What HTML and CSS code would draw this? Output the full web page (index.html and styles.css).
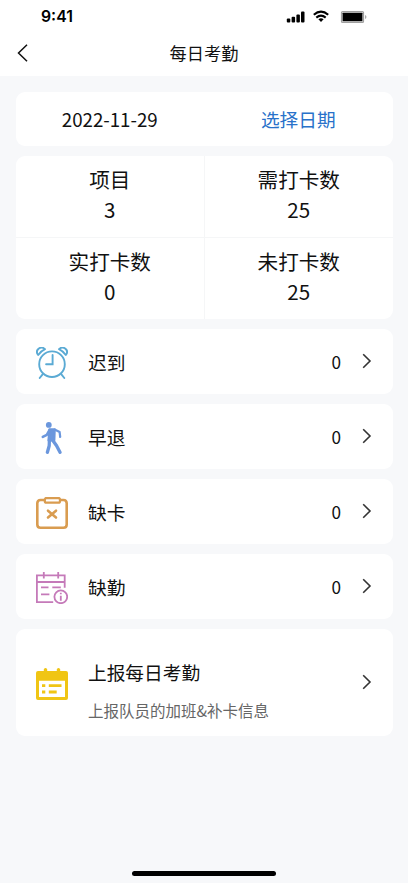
FILE: index.html
```html
<!DOCTYPE html>
<html lang="zh-CN">
<head>
<meta charset="UTF-8">
<meta name="viewport" content="width=device-width, initial-scale=1">
<title>每日考勤</title>
<link rel="stylesheet" href="styles.css">
</head>
<body>
<header class="top">
  <div class="status">
    <span class="clock">9:41</span>
    <svg class="status-icons" width="84" height="16" viewBox="0 0 84 16">
      <g fill="#000">
        <rect x="0.8" y="9.5" width="3.5" height="4" rx="1"/>
        <rect x="5.6" y="7.8" width="3.5" height="5.7" rx="1"/>
        <rect x="10.4" y="5.5" width="3.5" height="8" rx="1"/>
        <rect x="15" y="2.5" width="3.5" height="11" rx="1"/>
        <path d="M32.4 10.2 Q35 8.1 37.6 10.2 L35 13Z"/>
      </g>
      <path d="M27.8 5.8Q35 -0.4 42.2 5.8M30.3 8.6Q35 4.7 39.7 8.6" fill="none" stroke="#000" stroke-width="2.1"/>
      <rect x="55.6" y="2.6" width="21.8" height="10.8" rx="1" fill="none" stroke="#a0a0a0" stroke-width="1.4"/>
      <rect x="56.6" y="3.7" width="19.8" height="8.6" rx="0.6"/>
      <path d="M79.2 6v4q1.2-.6 1.2-2t-1.2-2Z" fill="#999"/>
    </svg>
  </div>
  <div class="nav">
    <svg class="back" width="12" height="20" viewBox="0 0 12 20"><path d="M10 1.7 1.5 10 10 18.3" fill="none" stroke="#111" stroke-width="1.5"/></svg>
    <h1>每日考勤</h1>
  </div>
</header>
<main>
  <section class="card date"><span>2022-11-29</span><span class="pick">选择日期</span></section>
  <section class="card stats">
    <div class="stat"><span>项目</span><span>3</span></div>
    <div class="stat"><span>需打卡数</span><span>25</span></div>
    <div class="stat"><span>实打卡数</span><span>0</span></div>
    <div class="stat"><span>未打卡数</span><span>25</span></div>
  </section>
  <section class="card row">
    <svg class="icon" viewBox="0 0 32 32" fill="none" stroke="#5aaad4" stroke-width="1.9" stroke-linecap="round">
      <circle cx="16" cy="17.2" r="12.8"/>
      <path d="M16.6 8v9.3h-6.5M6.4 27.6 3.7 31M25.6 27.6 28.3 31"/>
      <path d="M2.2 8C-1.6 3.4 4.7-2 9 2.2Q4.9 4.2 2.2 8ZM29.8 8C33.6 3.4 27.3-2 23 2.2Q27.1 4.2 29.8 8Z" stroke-linejoin="round"/>
    </svg>
    <span class="label">迟到</span><span class="count">0</span>
    <svg class="arrow" viewBox="0 0 10 16"><path d="M1.2 1.2 8 8 1.2 14.8"/></svg>
  </section>
  <section class="card row">
    <svg class="icon" viewBox="0 0 32 32" fill="none" stroke="#6b97dd" stroke-linecap="round" stroke-linejoin="round">
      <circle cx="12.8" cy="2.9" r="2.9" fill="#6b97dd" stroke="none"/>
      <path d="M13.5 7.5 18.6 7.5 18.2 18.3 12.6 18.3Z" fill="#6b97dd" stroke-width="2.4"/>
      <path d="M13.6 8 10.8 12.8 6.8 14.8" stroke-width="2.6"/>
      <path d="M18.6 7.6 23.6 10 24.2 15" stroke-width="2.2"/>
      <path d="M13.4 18 13.2 23.8 11.4 30.3M16.5 18 20.6 23.8 24 30.3" stroke-width="3.3"/>
    </svg>
    <span class="label">早退</span><span class="count">0</span>
    <svg class="arrow" viewBox="0 0 10 16"><path d="M1.2 1.2 8 8 1.2 14.8"/></svg>
  </section>
  <section class="card row">
    <svg class="icon" viewBox="0 0 32 32" fill="none" stroke="#d99c50" stroke-width="2.6">
      <path d="M8.2 3H4.5Q1.3 3 1.3 6.2V27.5Q1.3 30.7 4.5 30.7H27.5Q30.7 30.7 30.7 27.5V6.2Q30.7 3 27.5 3H23.8"/>
      <rect x="8.8" y="1" width="15.2" height="4.7" rx="1.7" stroke-width="2.3"/>
      <path d="M12 13.7 20 20.5M20 13.7 12 20.5" stroke-linecap="round"/>
    </svg>
    <span class="label">缺卡</span><span class="count">0</span>
    <svg class="arrow" viewBox="0 0 10 16"><path d="M1.2 1.2 8 8 1.2 14.8"/></svg>
  </section>
  <section class="card row">
    <svg class="icon" viewBox="0 0 32 32" fill="none" stroke="#c57ab9" stroke-width="1.8">
      <path d="M17.2 30.2H.9V3.4H28.7V15.8M.9 10H28.7M7.8 0V6.4M22.2 0V6.4M5 15.3H12.5M16.3 15.3H24.8M5 22.3H13.4"/>
      <circle cx="24.8" cy="24.8" r="6.4"/>
      <path d="M24.8 23.8V28.7M24.8 20.7V22.3"/>
    </svg>
    <span class="label">缺勤</span><span class="count">0</span>
    <svg class="arrow" viewBox="0 0 10 16"><path d="M1.2 1.2 8 8 1.2 14.8"/></svg>
  </section>
  <section class="card row report">
    <svg class="icon" viewBox="0 0 32 32">
      <path fill="#f0c514" fill-rule="evenodd" d="M2 3H7.8V1.2Q9.5-1.2 11.2 1.2V3H20.8V1.2Q22.5-1.2 24.2 1.2V3H30Q32 3 32 5V30Q32 32 30 32H2Q0 32 0 30V5Q0 3 2 3ZM3 12.8V29H29V12.8Z"/>
      <path stroke="#f0c514" stroke-width="2.8" d="M6 17.7H9.3M12.8 17.7H25.5M6 24H9.3M12.8 24H20.7"/>
    </svg>
    <div class="text"><span class="title">上报每日考勤</span><span class="sub">上报队员的加班&amp;补卡信息</span></div>
    <svg class="arrow" viewBox="0 0 10 16"><path d="M1.2 1.2 8 8 1.2 14.8"/></svg>
  </section>
</main>
<footer><div class="home"></div></footer>
</body>
</html>
```

FILE: styles.css
```css
* { box-sizing: border-box; }
body {
  margin: 0;
  height: 883px;
  display: flex;
  flex-direction: column;
  background: #f7f8fa;
  color: #111;
  font-family: "Noto Sans CJK SC", sans-serif;
}
svg { display: block; flex: none; }
.top { height: 76px; background: #fff; }
.status {
  height: 33px;
  display: flex;
  justify-content: space-between;
  padding: 0 38px 0 41px;
}
.clock { font: 600 15.8px/33px Inter, sans-serif; color: #000; }
.status-icons { margin-top: 9px; }
.nav {
  height: 40px;
  display: grid;
  grid-template-columns: 1fr auto 1fr;
  align-items: center;
  padding: 0 16px;
}
.back { margin-left: 0.7px; }
h1 { margin: 0; font-size: 17.2px; font-weight: 400; line-height: 40px; }
main {
  flex: 1;
  display: flex;
  flex-direction: column;
  gap: 10px;
  padding: 16px 15.5px 0;
}
.card { background: #fff; border-radius: 9px; }
.date {
  height: 54px;
  display: grid;
  grid-template-columns: 1fr 1fr;
  text-align: center;
  font-size: 18.7px;
  line-height: 54px;
}
.pick { color: #2972ca; }
.stats {
  height: 163px;
  display: grid;
  grid-template: 1fr 1fr / 1fr 1fr;
  overflow: hidden;
}
.stat {
  display: flex;
  flex-direction: column;
  align-items: center;
  padding-top: 8px;
  font-size: 20.6px;
  line-height: 30px;
}
.stat:nth-child(even) { border-left: 1px solid #f5f6f7; }
.stat:nth-child(-n+2) { border-bottom: 1px solid #f5f6f7; }
.row {
  height: 65px;
  display: flex;
  align-items: center;
  padding: 2px 21px 0 20.5px;
  font-size: 18.7px;
}
.icon { width: 32px; height: 32px; margin-right: 20px; }
.label { flex: 1; padding-bottom: 3px; }
.count { font-size: 17.2px; margin-right: 20.5px; padding-bottom: 2px; }
.arrow { width: 10px; height: 16px; margin-top: -4px; }
.arrow path { fill: none; stroke: #333; stroke-width: 1.6; }
.report { height: 107px; }
.report .icon, .report .arrow { position: relative; top: 0.4px; }
.text { flex: 1; display: flex; flex-direction: column; padding-top: 14px; }
.title { line-height: 38px; }
.sub { font-size: 15.5px; line-height: 38px; color: #666; }
footer { display: flex; justify-content: center; padding-bottom: 7px; }
.home { width: 144px; height: 5px; border-radius: 3px; background: #000; }
```
